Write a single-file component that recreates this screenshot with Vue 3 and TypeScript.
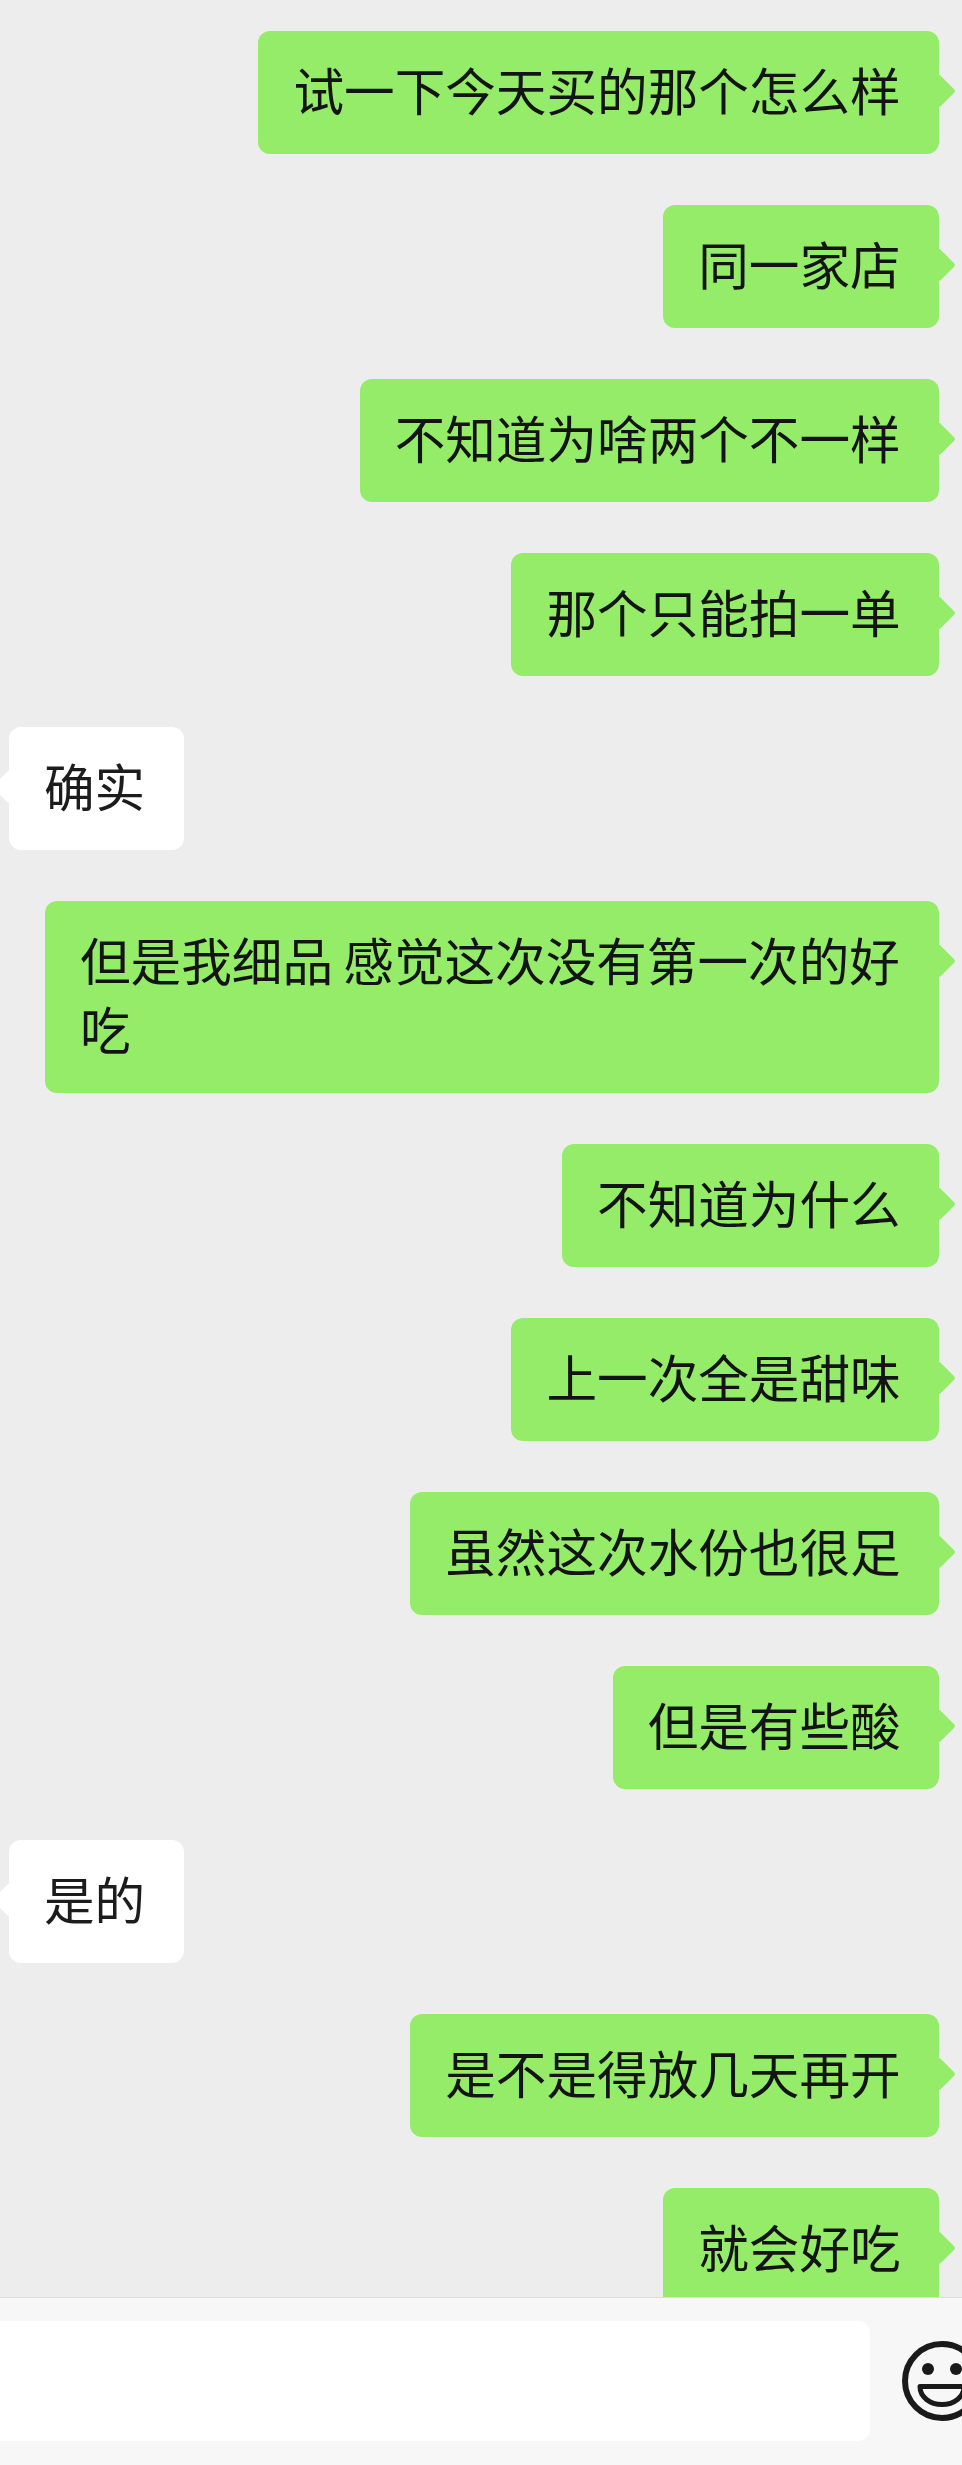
<script setup lang="ts">
interface Message {
  text: string
  mine: boolean
}

const messages: Message[] = [
  { text: '试一下今天买的那个怎么样', mine: true },
  { text: '同一家店', mine: true },
  { text: '不知道为啥两个不一样', mine: true },
  { text: '那个只能拍一单', mine: true },
  { text: '确实', mine: false },
  { text: '但是我细品 感觉这次没有第一次的好吃', mine: true },
  { text: '不知道为什么', mine: true },
  { text: '上一次全是甜味', mine: true },
  { text: '虽然这次水份也很足', mine: true },
  { text: '但是有些酸', mine: true },
  { text: '是的', mine: false },
  { text: '是不是得放几天再开', mine: true },
  { text: '就会好吃', mine: true }
]
</script>

<template>
  <div class="chat">
    <div class="messages">
      <div
        v-for="(msg, i) in messages"
        :key="i"
        class="bubble"
        :class="msg.mine ? 'bubble--mine' : 'bubble--theirs'"
      >
        {{ msg.text }}
      </div>
    </div>
    <div class="composer">
      <div class="composer__input"></div>
      <svg class="composer__emoji" width="80" height="80" viewBox="0 0 80 80" fill="none">
        <circle cx="40" cy="40" r="37" stroke="#1a1a1a" stroke-width="6" />
        <circle cx="26" cy="28" r="6" fill="#1a1a1a" />
        <circle cx="54" cy="28" r="6" fill="#1a1a1a" />
        <path
          d="M18 45.500H62C62 56 52 63.500 40 63.500C28 63.500 18 56 18 45.500Z"
          stroke="#1a1a1a"
          stroke-width="5"
          stroke-linejoin="round"
        />
      </svg>
    </div>
  </div>
</template>

<style scoped>
.chat {
  display: flex;
  flex-direction: column;
  height: 2465px;
  overflow: hidden;
  background: #ededed;
  font-family: 'Noto Sans CJK SC', 'Liberation Sans', sans-serif;
}
.messages {
  flex: 1;
  min-height: 0;
  display: flex;
  flex-direction: column;
  gap: 51px;
  padding: 31px 23px 0 9px;
  overflow: hidden;
}
.bubble {
  position: relative;
  flex-shrink: 0;
  box-sizing: border-box;
  max-width: 894px;
  padding: 24px 38.4px 30px 35px;
  border-radius: 12px;
  font-size: 50.6px;
  line-height: 69px;
  word-spacing: -1px;
  color: #141414;
}
.bubble::after {
  content: '';
  position: absolute;
  top: 48px;
  width: 24px;
  height: 24px;
  border-radius: 3px;
  background: inherit;
  transform: rotate(45deg);
}
.bubble--mine {
  align-self: flex-end;
  background: #95ec69;
}
.bubble--mine::after {
  right: -12px;
}
.bubble--theirs {
  align-self: flex-start;
  background: #fff;
  color: #1c1c1c;
}
.bubble--theirs::after {
  left: -12px;
}
.composer {
  position: relative;
  z-index: 1;
  flex: none;
  box-sizing: border-box;
  height: 168px;
  display: flex;
  align-items: flex-start;
  gap: 32px;
  padding-top: 23px;
  border-top: 1px solid #dcdcdc;
  background: #f7f7f7;
}
.composer__input {
  flex: none;
  width: 870px;
  height: 120px;
  border-radius: 0 12px 12px 0;
  background: #fff;
}
.composer__emoji {
  flex: none;
  margin-top: 20px;
}
</style>

<style>
body {
  background: #ededed;
}
</style>
